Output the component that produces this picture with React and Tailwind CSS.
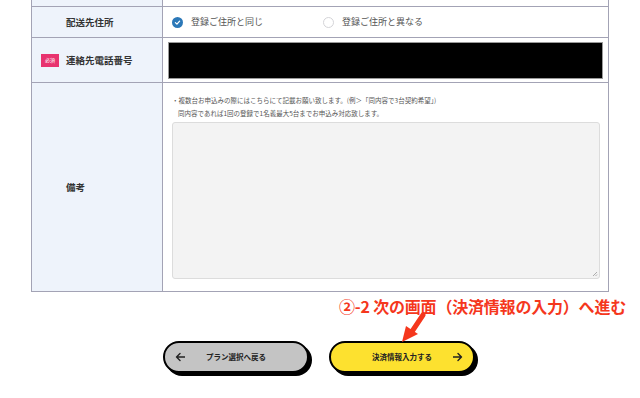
import React from "react";

const jp = { fontFamily: '"Noto Sans CJK JP", "Noto Sans", sans-serif' };

function Radio({ checked, label }) {
    return (
        <div className="flex items-center gap-[8px]">
            {checked ? (
                <span className="w-[11px] h-[11px] rounded-full bg-[#2b78b8] flex items-center justify-center">
                    <svg width="7" height="7" viewBox="0 0 10 10">
                        <path d="M2 5.2 L4.2 7.3 L8 3" stroke="#fff" strokeWidth="1.8" fill="none" strokeLinecap="round" strokeLinejoin="round" />
                    </svg>
                </span>
            ) : (
                <span className="w-[11px] h-[11px] rounded-full border border-[#d4d4d8] bg-white" />
            )}
            <span className="text-[9px] text-[#555]">{label}</span>
        </div>
    );
}

function Arrow({ dir }) {
    const d = dir === "left" ? "M10 5 H1.5 M5 1.5 L1.5 5 L5 8.5" : "M0 5 H8.5 M5 1.5 L8.5 5 L5 8.5";
    return (
        <svg width="10" height="10" viewBox="0 0 10 10">
            <path d={d} stroke="#222" strokeWidth="1.4" fill="none" strokeLinecap="round" strokeLinejoin="round" />
        </svg>
    );
}

function Row({ label, required, height, children }) {
    return (
        <div className="flex border-t border-[#a3a3b5]" style={{ height }}>
            <div className="w-[131px] shrink-0 bg-[#eef3fb] border-r border-[#a3a3b5] flex items-center pl-[9px]">
                {required ? (
                    <span className="w-[18px] h-[13px] bg-[#e8336f] text-white text-[5px] flex items-center justify-center mr-[7px]">必須</span>
                ) : (
                    <span className="w-[25px]" />
                )}
                <span className="text-[9.5px] font-bold text-[#333]">{label}</span>
            </div>
            <div className="flex-1 bg-white">{children}</div>
        </div>
    );
}

export default function App() {
    return (
        <div className="w-[640px] h-[398px] bg-white overflow-hidden relative" style={jp}>
            <div className="ml-[31px] w-[578px] border-x border-b border-[#a3a3b5]">
                <div className="flex h-[6px]">
                    <div className="w-[131px] bg-[#eef3fb] border-r border-[#a3a3b5]" />
                    <div className="flex-1" />
                </div>
                <Row label="配送先住所" height="31px">
                    <div className="h-full flex items-center pl-[9px] gap-[60px]">
                        <Radio checked label="登録ご住所と同じ" />
                        <Radio label="登録ご住所と異なる" />
                    </div>
                </Row>
                <Row label="連絡先電話番号" required height="45px">
                    <div className="h-full flex items-center pl-[5px] pr-[5px]">
                        <div className="w-full h-[37px] bg-black border border-[#9a9a9a]" />
                    </div>
                </Row>
                <Row label="備考" height="209px">
                    <div className="pl-[9px] pr-[8px] pt-[11px]">
                        <p className="text-[6.5px] text-[#555] leading-[13px]">・複数台お申込みの際にはこちらにて記載お願い致します。(例＞「同内容で3台契約希望」)</p>
                        <p className="text-[6.5px] text-[#555] leading-[13px] pl-[6px]">同内容であれば1回の登録で1名義最大5台までお申込み対応致します。</p>
                        <div className="mt-[2px] h-[157px] bg-[#f3f3f3] border border-[#dcdcdc] rounded-[3px] relative">
                            <svg className="absolute right-[1px] bottom-[1px]" width="6" height="6" viewBox="0 0 6 6">
                                <path d="M5 1 L1 5 M5 3.5 L3.5 5" stroke="#999" strokeWidth="0.8" />
                            </svg>
                        </div>
                    </div>
                </Row>
            </div>

            <div className="pl-[339px] mt-[4px] h-[20px] flex items-center">
                <span className="text-[16px] font-bold text-[#f5371d] whitespace-nowrap tracking-[-0.2px]">②-2 次の画面（決済情報の入力）へ進む</span>
            </div>

            <svg className="absolute left-[396px] top-[312px]" width="34" height="34" viewBox="0 0 34 34">
                <path d="M27 3 L15 21" stroke="#f5371d" strokeWidth="5" strokeLinecap="round" />
                <path d="M6 30 L10 14 L22 22 Z" fill="#f5371d" />
            </svg>

            <div className="flex gap-[20px] pl-[163px] mt-[25px]">
                <button className="w-[146px] h-[32px] rounded-full border-2 border-black bg-[#c4c4c4] shadow-[3px_3px_0_#000] flex items-center px-[10px]">
                    <Arrow dir="left" />
                    <span className="flex-1 text-center text-[7.5px] font-bold text-[#222] pr-[10px]">プラン選択へ戻る</span>
                </button>
                <button className="w-[146px] h-[32px] rounded-full border-2 border-black bg-[#fde12f] shadow-[3px_3px_0_#000] flex items-center px-[10px]">
                    <span className="flex-1 text-center text-[7.5px] font-bold text-[#222] pl-[10px]">決済情報入力する</span>
                    <Arrow dir="right" />
                </button>
            </div>
        </div>
    );
}
